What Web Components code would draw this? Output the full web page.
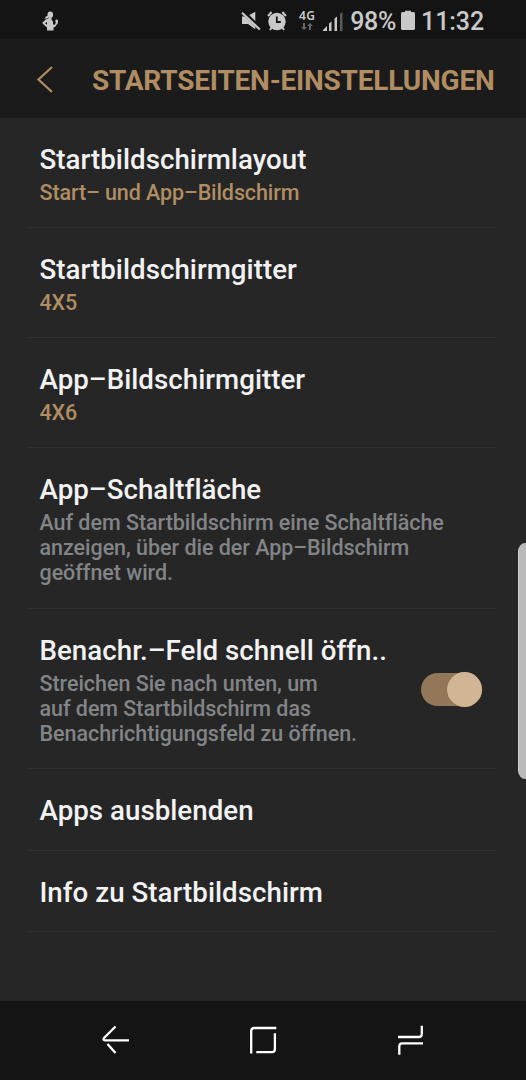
<!DOCTYPE html>
<html lang="de">
<head>
<meta charset="utf-8">
<title>Startseiten-Einstellungen</title>
<style>
html,body{margin:0;height:100%;background:#262626;overflow:hidden}
body{font-family:Roboto,"Liberation Sans",sans-serif;font-variant-ligatures:none}
</style>
</head>
<body>
<home-settings></home-settings>
<script>
const define = (name, html) => customElements.define(name, class extends HTMLElement {
  constructor() {
    super();
    this.attachShadow({ mode: 'open' }).innerHTML = html;
  }
});

define('status-bar', `
<style>
:host{display:flex;align-items:center;height:39px;background:#141414;color:#c9c9c9;box-sizing:border-box;padding:0 42px 0 41px;font-size:25px;font-weight:500}
svg{display:block;flex:none}
.space{flex:1}
.net{width:20px;margin:0 6px 0 10px;text-align:center}
.net b{display:block;font-family:"Noto Sans",Roboto,sans-serif;font-size:12px;line-height:13px;font-weight:600;letter-spacing:.4px}
.net svg{margin:1px auto 0}
.pct{letter-spacing:-.3px;margin-left:7px;line-height:39px;padding-top:3px}
.time{letter-spacing:-.1px;margin-left:6px;line-height:39px;padding-top:3px}
</style>
<svg width="18" height="20" viewBox="0 0 18 20" style="margin-top:2px"><g fill="#c9c9c9"><ellipse cx="9.300" cy="3.800" rx="2.800" ry="3.300"/><path d="M7.200 4.500 5 5.600 3.400 7.400l2.600.2 2.200-1.500V7h2.400v2l1.400 1.500v3l1.800.2 1-1.900-.6-2.400 1.200-.9 1.500.6v3l-2.700 3.600-1.700.7v3.200H6v-3L1.500 12.600v-1.200L4.800 8.500l3.400-1.500z"/></g><path d="M4 12.200 6 10.900v2.900z" fill="#141414"/></svg>
<span class="space"></span>
<svg width="20" height="20" viewBox="0 0 20 20" style="margin-top:2px"><path d="M1 5.500h4.500L14.300.7v17.600L7 13H1z" fill="#c9c9c9"/><path d="M1.600.5 20 18.500" stroke="#141414" stroke-width="4.200"/><path d="M1 1.800 18.800 18.500" stroke="#c9c9c9" stroke-width="2.200"/></svg>
<svg width="20" height="20" viewBox="0 0 20 20" style="margin:2px 0 0 6px"><circle cx="10" cy="10.500" r="8.700" fill="#c9c9c9"/><path d="M1 5 4.600 1M15.400 1 19 5M4.500 16.500 3 19M15.500 16.500 17 19" stroke="#c9c9c9" stroke-width="2"/><path d="M9.800 5.500v5.500h4" fill="none" stroke="#141414" stroke-width="1.800"/></svg>
<div class="net"><b>4G</b><svg width="12" height="7" viewBox="0 0 12 7"><path d="M2 0h2v4h2L3 7 0 4h2zM8 7h2V3h2L9 0 6 3h2z" fill="#666"/></svg></div>
<svg width="20" height="19" viewBox="0 0 20 19" style="margin-top:3px"><path d="M0 19v-1l4-4v5zM6 19v-7.500l2.500-2V19zM11.500 19V6.500l2.500-2V19z" fill="#c9c9c9"/><path d="M17 19V2l2.500-2v19z" fill="#5a5a5a"/></svg>
<span class="pct">98%</span>
<svg width="14" height="20" viewBox="0 0 14 20" style="margin:1px 0 0 5px"><path d="M4 2V.8h6V2h2.500q1.500 0 1.500 1.500v15q0 1.500-1.500 1.500h-11Q0 20 0 18.500v-15Q0 2 1.500 2z" fill="#c9c9c9"/></svg>
<span class="time">11:32</span>
`);

define('title-bar', `
<style>
:host{display:flex;align-items:center;height:79px;background:#1b1b1b;color:#b08d62;box-sizing:border-box;padding-left:36px}
svg{display:block;flex:none}
h1{margin:4px 0 0 39px;font-size:28px;line-height:34px;font-weight:700;white-space:nowrap;letter-spacing:-.2px}
</style>
<svg width="17" height="28" viewBox="0 0 17 28"><path d="M16 2 2.500 14.500 16 27" fill="none" stroke="#b08d62" stroke-width="2.200"/></svg>
<h1><slot></slot></h1>
`);

define('toggle-switch', `
<style>
:host{display:flex;align-items:center;justify-content:flex-end;width:61px;height:33px;border-radius:17px;background:#927859}
i{width:35px;height:35px;border-radius:50%;background:#d1b594;flex:none;margin-top:1px;box-shadow:0 0 1px #6d5637}
</style><i></i>
`);

define('setting-row', `
<style>
:host{display:flex;box-sizing:border-box;margin:0 30px 0 28px;padding:25px 14px 0 11.500px;border-bottom:1px solid #303030;height:110px;align-items:flex-start}
:host([lines="3"]){height:160.500px}
:host([lines="0"]){height:81.500px}
.text{flex:1;min-width:0}
.title{font-size:27.700px;line-height:34px;font-weight:500;color:#f2f2f2;white-space:nowrap;letter-spacing:.03px}
.sub{margin-top:3px;font-size:21.500px;line-height:25.200px;font-weight:500;color:#828486;white-space:nowrap;letter-spacing:-.04px}
:host([accent]) .sub{color:#b08d62;letter-spacing:-.1px}
.end{padding-top:39px}
</style>
<div class="text"><div class="title"><slot name="title"></slot></div><div class="sub"><slot></slot></div></div>
<div class="end"><slot name="end"></slot></div>
`);

define('nav-bar', `
<style>
:host{display:flex;align-items:center;justify-content:space-between;height:79px;background:#141414;box-sizing:border-box;padding:0 102px 2px 101px}
svg{display:block;fill:none;stroke:#fff;stroke-width:2.300}
</style>
<svg width="28" height="30" viewBox="0 0 28 30"><path d="M14.500 1.500 2.800 13.200Q1.800 15.300 4 15.400H28M6.500 19 14.500 28"/></svg>
<svg width="28" height="30" viewBox="0 0 28 30"><path d="M2.200 28.500V6Q2.200 3 5.200 3H27.300M25.900 8.300V24Q25.900 27.200 23 27.200H7.300"/></svg>
<svg width="28" height="30" viewBox="0 0 28 30"><path d="M25.800.8V9Q25.800 12 22.800 12H2M27 18.300H6.300Q3.300 18.300 3.300 21.300V29.700"/></svg>
`);

define('edge-handle', `
<style>:host{display:block;position:absolute;right:0;top:543px;width:8px;height:236px;box-sizing:border-box;background:#b9b9b9;border-left:1px solid #d0d0d0;border-radius:7px 0 0 7px / 9px 0 0 9px}</style>
`);

define('home-settings', `
<style>
:host{display:flex;flex-direction:column;position:relative;width:526px;height:1080px;overflow:hidden;background:#262626}
main{flex:1;min-height:0}
</style>
<status-bar></status-bar>
<title-bar>STARTSEITEN-EINSTELLUNGEN</title-bar>
<main>
<setting-row accent><span slot="title">Startbildschirmlayout</span>Start– und App–Bildschirm</setting-row>
<setting-row accent><span slot="title">Startbildschirmgitter</span>4X5</setting-row>
<setting-row accent><span slot="title">App–Bildschirmgitter</span>4X6</setting-row>
<setting-row lines="3"><span slot="title">App–Schaltfläche</span>Auf dem Startbildschirm eine Schaltfläche<br>anzeigen, über die der App–Bildschirm<br>geöffnet wird.</setting-row>
<setting-row lines="3"><span slot="title">Benachr.–Feld schnell öffn..</span>Streichen Sie nach unten, um<br>auf dem Startbildschirm das<br>Benachrichtigungsfeld zu öffnen.<toggle-switch slot="end"></toggle-switch></setting-row>
<setting-row lines="0"><span slot="title">Apps ausblenden</span></setting-row>
<setting-row lines="0"><span slot="title">Info zu Startbildschirm</span></setting-row>
</main>
<nav-bar></nav-bar>
<edge-handle></edge-handle>
`);
</script>
</body>
</html>
